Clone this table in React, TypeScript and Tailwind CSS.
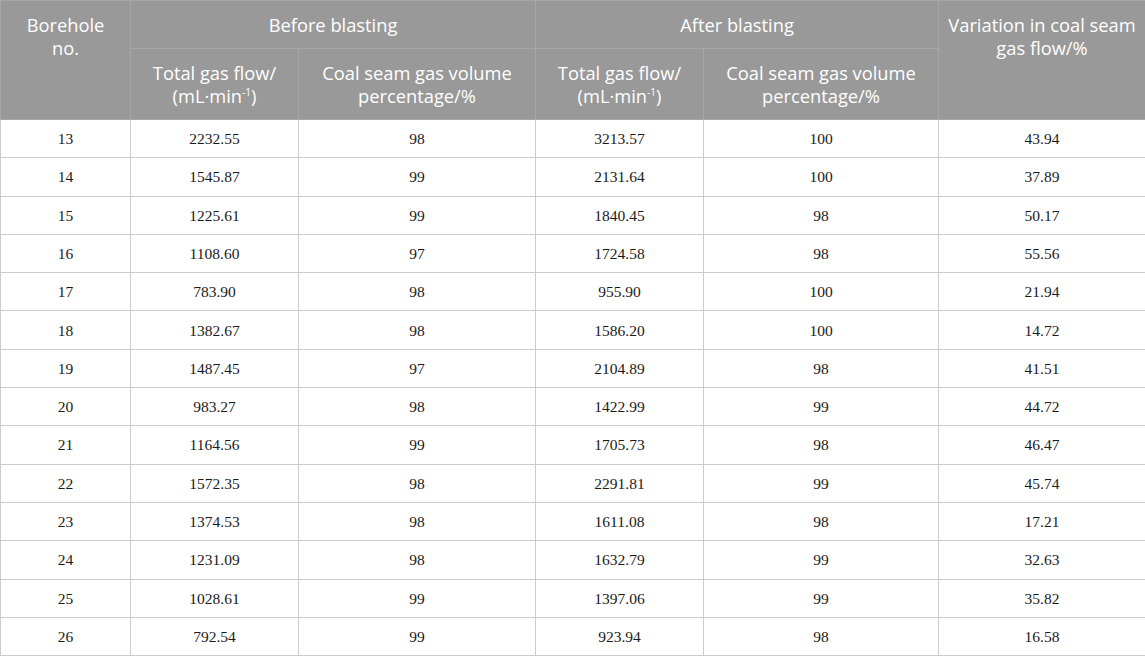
const rows: [string, string, string, string, string, string][] = [
  ["13", "2232.55", "98", "3213.57", "100", "43.94"],
  ["14", "1545.87", "99", "2131.64", "100", "37.89"],
  ["15", "1225.61", "99", "1840.45", "98", "50.17"],
  ["16", "1108.60", "97", "1724.58", "98", "55.56"],
  ["17", "783.90", "98", "955.90", "100", "21.94"],
  ["18", "1382.67", "98", "1586.20", "100", "14.72"],
  ["19", "1487.45", "97", "2104.89", "98", "41.51"],
  ["20", "983.27", "98", "1422.99", "99", "44.72"],
  ["21", "1164.56", "99", "1705.73", "98", "46.47"],
  ["22", "1572.35", "98", "2291.81", "99", "45.74"],
  ["23", "1374.53", "98", "1611.08", "98", "17.21"],
  ["24", "1231.09", "98", "1632.79", "99", "32.63"],
  ["25", "1028.61", "99", "1397.06", "99", "35.82"],
  ["26", "792.54", "99", "923.94", "98", "16.58"],
];

const th = "border border-[#a8a8a8] bg-[#999999] text-white font-normal text-center px-1 leading-[23px] whitespace-nowrap";

function Flow() {
  return (
    <>
      Total gas flow/
      <br />
      (mL·min<sup className="text-[10px] -top-[7px]">-1</sup>)
    </>
  );
}

export default function App() {
  return (
    <div className="w-[1145px] h-[658px] bg-white overflow-hidden">
      <table
        className="w-[1145px] border-collapse table-fixed"
        style={{ fontFamily: "'Open Sans', 'Noto Sans', sans-serif" }}
      >
        <colgroup>
          <col className="w-[130px]" />
          <col className="w-[168px]" />
          <col className="w-[237px]" />
          <col className="w-[168px]" />
          <col className="w-[235px]" />
          <col className="w-[207px]" />
        </colgroup>
        <thead className="text-[18.3px]">
          <tr className="h-[48px]">
            <th rowSpan={2} className={`${th} align-top pt-[12px]`}>
              Borehole
              <br />
              no.
            </th>
            <th colSpan={2} className={th}>
              Before blasting
            </th>
            <th colSpan={2} className={th}>
              After blasting
            </th>
            <th rowSpan={2} className={`${th} align-top pt-[12px]`}>
              Variation in coal seam
              <br />
              gas flow/%
            </th>
          </tr>
          <tr className="h-[71px]">
            <th className={`${th} align-top pt-[12px]`}>
              <Flow />
            </th>
            <th className={`${th} align-top pt-[12px]`}>
              Coal seam gas volume
              <br />
              percentage/%
            </th>
            <th className={`${th} align-top pt-[12px]`}>
              <Flow />
            </th>
            <th className={`${th} align-top pt-[12px]`}>
              Coal seam gas volume
              <br />
              percentage/%
            </th>
          </tr>
        </thead>
        <tbody
          className="text-[15.5px] text-[#1a1a1a]"
          style={{ fontFamily: "'Liberation Serif', 'Times New Roman', serif" }}
        >
          {rows.map((r) => (
            <tr key={r[0]} className="h-[38.3px]">
              {r.map((c, i) => (
                <td key={i} className="border border-[#cccccc] text-center p-0">
                  {c}
                </td>
              ))}
            </tr>
          ))}
        </tbody>
      </table>
    </div>
  );
}
